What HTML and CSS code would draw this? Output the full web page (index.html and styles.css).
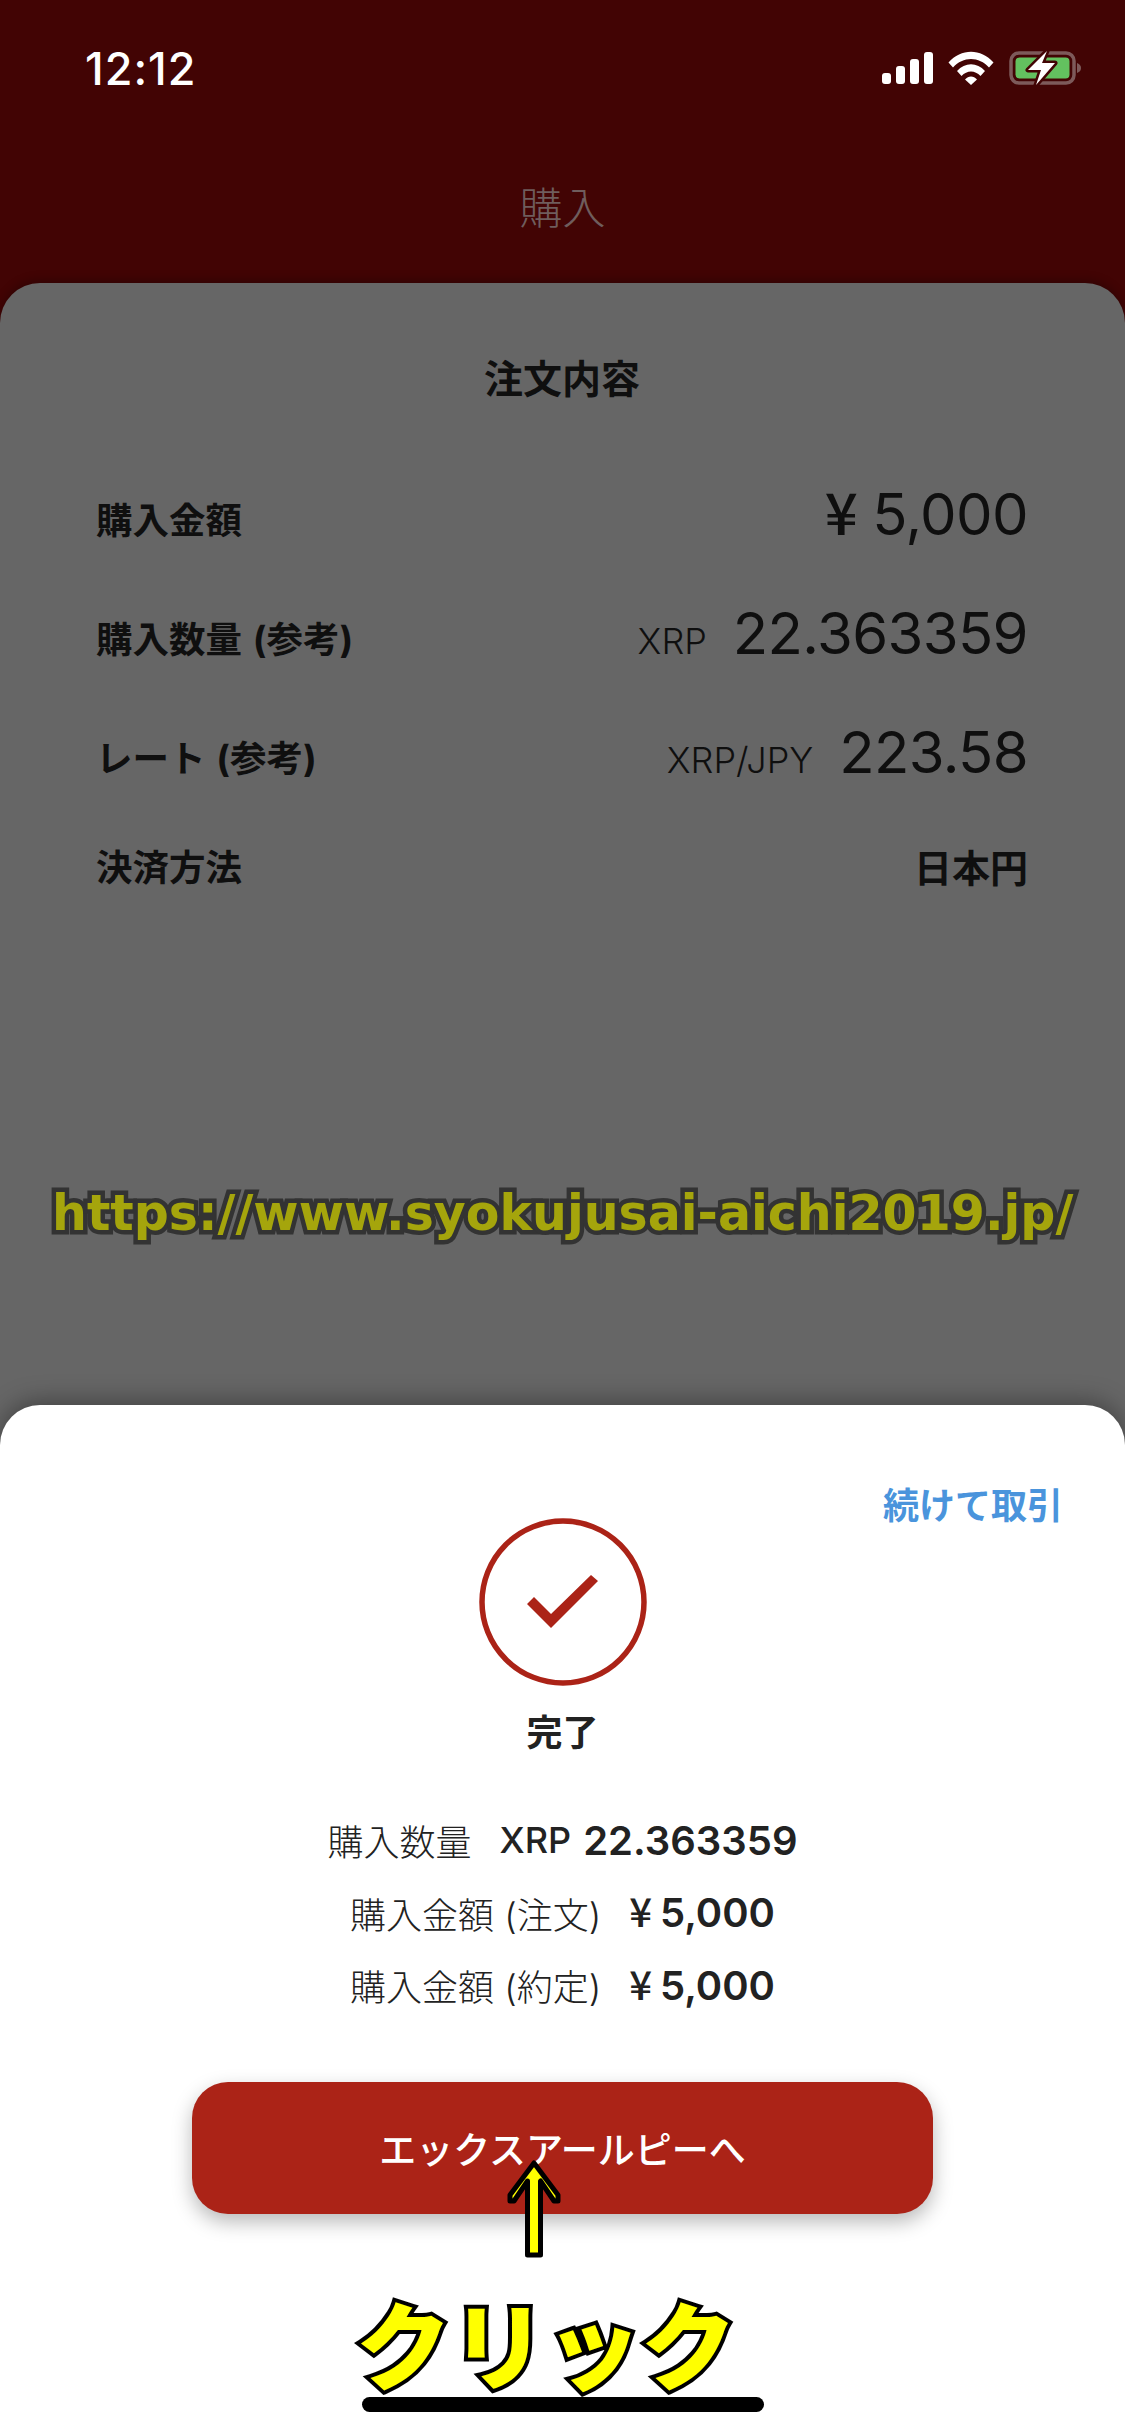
FILE: index.html
```html
<!DOCTYPE html>
<html lang="ja">
<head>
    <meta charset="UTF-8">
    <title>購入</title>
    <link rel="stylesheet" href="styles.css">
</head>
<body>
    <div class="phone">
        <header class="top">
            <div class="status">
                <span class="time">12:12</span>
                <div class="status-icons">
                    <svg class="signal" width="51" height="32" viewBox="0 0 51 32">
                        <rect x="0" y="21" width="9" height="11" rx="3" fill="#fff"/>
                        <rect x="14" y="14" width="9" height="18" rx="3" fill="#fff"/>
                        <rect x="28" y="7" width="9" height="25" rx="3" fill="#fff"/>
                        <rect x="42" y="0" width="9" height="32" rx="3" fill="#fff"/>
                    </svg>
                    <svg class="wifi" width="46" height="34" viewBox="0 0 46 34">
                        <path d="M0.5 11.5C13 -3 33 -3 45.500 11.500L41 16.500C31 5 15 5 5 16.500Z" fill="#fff"/>
                        <path d="M9 20C17 11 29 11 37 20L32.500 25C27 19 19 19 13.500 25Z" fill="#fff"/>
                        <path d="M17 28.500C20.500 24.500 25.500 24.500 29 28.500L23 34Z" fill="#fff"/>
                    </svg>
                    <svg class="battery" width="73" height="36" viewBox="0 0 73 36">
                        <rect x="2" y="3" width="63" height="30" rx="8" fill="none" stroke="#7d5a5a" stroke-width="3.500"/>
                        <path d="M68 13C71 14 72 16 72 18C72 20 71 22 68 23Z" fill="#7d5a5a"/>
                        <rect x="6.500" y="7.500" width="54" height="21" rx="4" fill="#63c15f"/>
                        <path d="M38 1L19 20H32L27 35L46 13H33Z" fill="#fff" stroke="#420404" stroke-width="5" stroke-linejoin="round" paint-order="stroke"/>
                    </svg>
                </div>
            </div>
            <h1 class="page-title">購入</h1>
        </header>

        <main class="order">
            <h2 class="order-title">注文内容</h2>
            <div class="order-row">
                <span class="order-label">購入金額</span>
                <span class="order-value"><span class="num"><span class="yen">¥</span>5,000</span></span>
            </div>
            <div class="order-row">
                <span class="order-label">購入数量 (参考)</span>
                <span class="order-value"><span class="unit">XRP</span><span class="num">22.363359</span></span>
            </div>
            <div class="order-row">
                <span class="order-label">レート (参考)</span>
                <span class="order-value"><span class="unit">XRP/JPY</span><span class="num">223.58</span></span>
            </div>
            <div class="order-row order-row-last">
                <span class="order-label">決済方法</span>
                <span class="order-label order-label-big">日本円</span>
            </div>
        </main>

        <div class="url-note">https://www.syokujusai-aichi2019.jp/</div>

        <section class="done-sheet">
            <div class="continue-row"><a class="continue">続けて取引</a></div>
            <svg class="done-icon" width="168" height="168" viewBox="0 0 168 168">
                <circle cx="84" cy="84" r="81" fill="none" stroke="#ab2317" stroke-width="5.500"/>
                <path d="M48 86L55 79L72 96L112 57L119 63L72 110Z" fill="#ab2317"/>
            </svg>
            <div class="done-text">完了</div>
            <div class="result">
                <div class="result-line"><span class="result-label">購入数量</span><span class="result-unit">XRP</span><b>22.363359</b></div>
                <div class="result-line"><span class="result-label">購入金額 (注文)</span><b><span class="result-yen">¥</span>5,000</b></div>
                <div class="result-line"><span class="result-label">購入金額 (約定)</span><b><span class="result-yen">¥</span>5,000</b></div>
            </div>
            <button class="main-btn">エックスアールピーへ</button>
        </section>

        <!-- yellow notes drawn on top of the screenshot -->
        <svg class="note-arrow" width="64" height="106" viewBox="0 0 64 106">
            <path d="M32 6L56 38V44H52L38.500 24V98H25.500V24L12 44H8V38Z" fill="#ffff00" stroke="#000" stroke-width="5" stroke-linejoin="round"/>
        </svg>
        <div class="note-click">クリック</div>
        <div class="home-bar"></div>
    </div>
</body>
</html>
```

FILE: styles.css
```css
* {
    box-sizing: border-box;
}

body {
    margin: 0;
    font-family: Inter, "Noto Sans CJK JP", sans-serif;
    background-color: #420404;
}

.phone {
    position: relative;
    width: 1125px;
    height: 2436px;
    overflow: hidden;
    display: flex;
    flex-direction: column;
}

.top {
    height: 283px;
    background-color: #420404;
    padding: 44px 43px 0 85px;
}

.status {
    display: flex;
    justify-content: space-between;
    align-items: center;
    height: 48px;
}

.time {
    color: white;
    font-size: 45px;
    font-weight: 500;
    letter-spacing: 1px;
}

.status-icons {
    display: flex;
    align-items: center;
    gap: 15px;
}

.page-title {
    margin: 84px 0 0 -42px;
    text-align: center;
    color: #6f5d5d;
    font-size: 43px;
    font-weight: 300;
    line-height: 64px;
}

.order {
    flex: 1;
    background-color: #666666;
    border-radius: 40px 40px 0 0;
    padding: 70px 97px 0 96px;
    box-shadow: 0 -3px 10px rgba(0, 0, 0, 0.25);
    color: #0f0f0f;
}

.order-title {
    margin: 0 0 54px 0;
    text-align: center;
    font-size: 39px;
    font-weight: 700;
    line-height: 52px;
}

.order-row {
    display: flex;
    justify-content: space-between;
    align-items: center;
    height: 119px;
}

.order-row-last {
    height: 98px;
}

.order-label {
    font-size: 36.500px;
    font-weight: 700;
    word-spacing: 2px;
}

.order-label-big {
    font-size: 38px;
}

.order-value {
    display: flex;
    align-items: baseline;
    gap: 26px;
    padding-bottom: 9px;
}

.unit {
    font-size: 36px;
    font-weight: 300;
}

.num {
    font-size: 58px;
    font-weight: 400;
    letter-spacing: -0.600px;
}

.yen {
    margin-right: 15px;
    font-family: "Noto Sans CJK JP", sans-serif;
    font-size: 58px;
    font-weight: 500;
    line-height: 0;
}

.url-note {
    position: absolute;
    left: 52px;
    top: 1181px;
    font-family: "DejaVu Sans", sans-serif;
    font-size: 49px;
    font-weight: 700;
    line-height: 66px;
    white-space: nowrap;
    color: #a5a50c;
    -webkit-text-stroke: 9px #333333;
    paint-order: stroke fill;
}

.done-sheet {
    position: absolute;
    left: 0;
    right: 0;
    top: 1405px;
    bottom: 0;
    background-color: white;
    border-radius: 40px 40px 0 0;
    box-shadow: 0 -4px 24px rgba(0, 0, 0, 0.35);
    display: flex;
    flex-direction: column;
    align-items: center;
    padding-top: 75px;
    color: #222222;
}

.continue-row {
    align-self: stretch;
    display: flex;
    justify-content: flex-end;
    padding-right: 62px;
    height: 52px;
}

.continue {
    color: #4a94dc;
    font-size: 36px;
    font-weight: 700;
    line-height: 52px;
}

.done-icon {
    margin-top: -14px;
}

.done-text {
    margin-top: 22px;
    font-size: 36px;
    font-weight: 700;
    line-height: 50px;
}

.result {
    margin-top: 46px;
    display: flex;
    flex-direction: column;
    align-items: center;
}

.result-line {
    height: 72.500px;
    display: flex;
    align-items: center;
    font-size: 36px;
    font-weight: 300;
}

.result-label {
    margin-right: 28px;
}

.result-unit {
    margin-right: 12px;
    font-size: 36px;
    font-weight: 500;
}

.result-line b {
    font-size: 40px;
    font-weight: 600;
}

.result-yen {
    margin-right: 8px;
    font-family: "Noto Sans CJK JP", sans-serif;
    font-size: 40px;
    font-weight: 500;
    line-height: 0;
}

.main-btn {
    margin-top: 60px;
    width: 741px;
    height: 132px;
    border: none;
    border-radius: 36px;
    background-color: #ab2317;
    color: white;
    font-family: inherit;
    font-size: 37px;
    font-weight: 500;
    box-shadow: 0 8px 20px rgba(0, 0, 0, 0.28);
}

.note-arrow {
    position: absolute;
    left: 502px;
    top: 2157px;
}

.note-click {
    position: absolute;
    left: 356px;
    top: 2272px;
    font-family: "Noto Sans CJK JP", sans-serif;
    font-size: 95px;
    font-weight: 900;
    line-height: 140px;
    color: #ffff00;
    -webkit-text-stroke: 8px #000;
    paint-order: stroke fill;
}

.home-bar {
    position: absolute;
    left: 362px;
    top: 2397px;
    width: 402px;
    height: 15px;
    border-radius: 8px;
    background-color: black;
}
```
